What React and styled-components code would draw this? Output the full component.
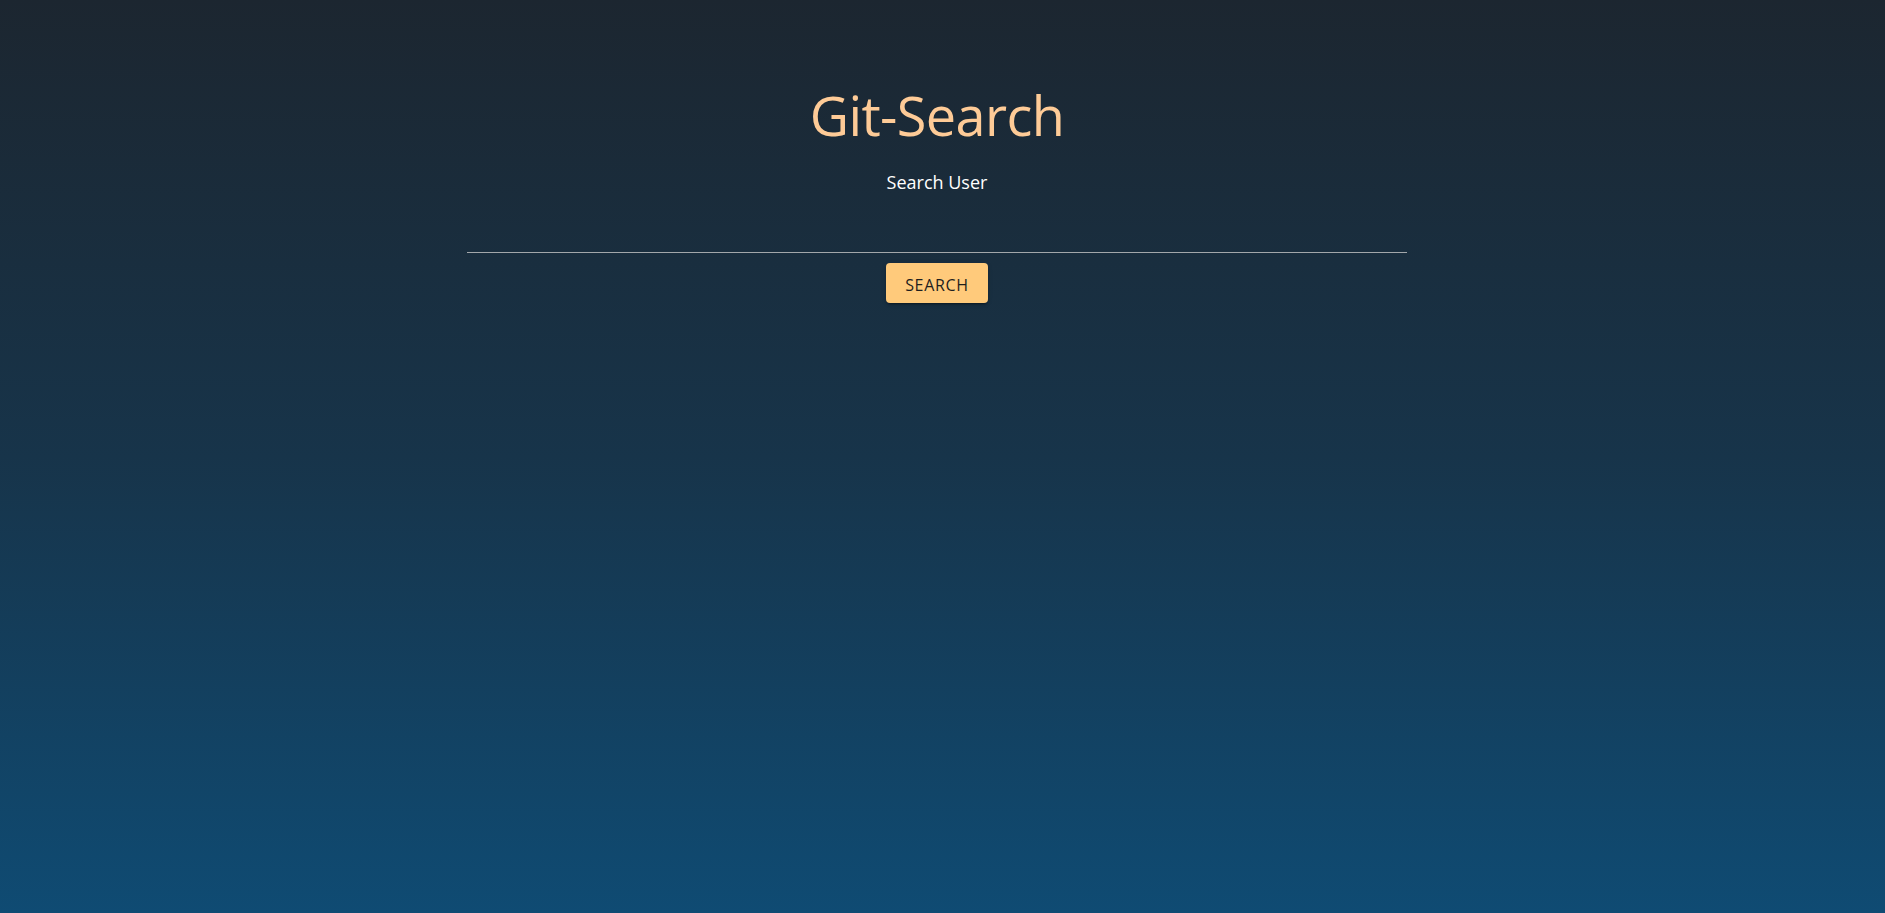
import React, { useState } from 'react';
import styled, { createGlobalStyle } from 'styled-components';

const GlobalStyle = createGlobalStyle`
  html, body {
    margin: 0;
    padding: 0;
  }
  body {
    font-family: "Open Sans", "Noto Sans", sans-serif;
    background: linear-gradient(180deg, #1c2630 0%, #17344a 50%, #0f4b73 100%);
    min-height: 100vh;
  }
`;

const Page = styled.main`
  min-height: 100vh;
  box-sizing: border-box;
  padding: 79px 11px 0 0;
  display: flex;
  flex-direction: column;
  align-items: center;
`;

const Title = styled.h1`
  margin: 0;
  font-family: "Open Sans", "Noto Sans", sans-serif;
  font-weight: 400;
  font-size: 54px;
  line-height: 72px;
  letter-spacing: -0.6px;
  color: #fecb97;
`;

const Subtitle = styled.p`
  margin: 19px 0 0;
  font-size: 18px;
  line-height: 24px;
  color: #ffffff;
`;

const Field = styled.div`
  width: 940px;
  margin-top: 24px;
  border-bottom: 1px solid #a3a7ab;
`;

const Input = styled.input`
  width: 100%;
  box-sizing: border-box;
  height: 34px;
  background: transparent;
  border: none;
  outline: none;
  color: #ffffff;
  font-family: inherit;
  font-size: 18px;
  padding: 4px 0;
`;

const Button = styled.button`
  margin-top: 10px;
  width: 102px;
  height: 40px;
  padding: 3px 0 0;
  border: none;
  border-radius: 4px;
  background: #ffca7b;
  color: #1e1e1e;
  font-family: "Open Sans", "Noto Sans", sans-serif;
  font-size: 16px;
  letter-spacing: 0.7px;
  text-transform: uppercase;
  cursor: pointer;
  box-shadow: 0 3px 1px -2px rgba(0, 0, 0, 0.2), 0 2px 2px 0 rgba(0, 0, 0, 0.14),
    0 1px 5px 0 rgba(0, 0, 0, 0.12);
`;

function App() {
  const [user, setUser] = useState('');

  return (
    <>
      <GlobalStyle />
      <Page>
        <Title>Git-Search</Title>
        <Subtitle>Search User</Subtitle>
        <Field>
          <Input value={user} onChange={(e) => setUser(e.target.value)} />
        </Field>
        <Button>Search</Button>
      </Page>
    </>
  );
}

export default App;
